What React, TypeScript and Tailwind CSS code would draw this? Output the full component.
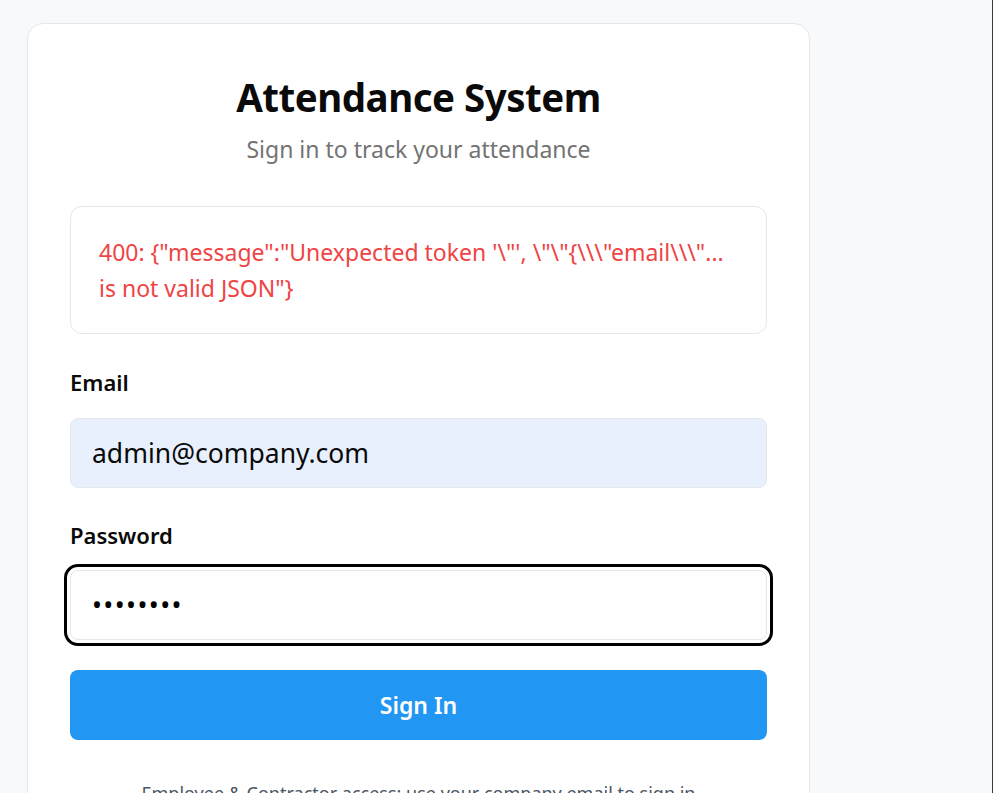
import { useState } from 'react'

const errorText =
  '400: {"message":"Unexpected token \'\\"\', \\"\\"{\\\\\\"email\\\\\\"... is not valid JSON"}'

export default function App() {
  const [email, setEmail] = useState('admin@company.com')
  const [password, setPassword] = useState('password')

  return (
    <div
      className="min-h-screen h-[793px] overflow-hidden bg-[#f8f9fb] border-r border-[#3a3a3a]"
      style={{ fontFamily: '"Noto Sans", "Open Sans", sans-serif' }}
    >
      <div className="ml-[27px] pt-[23px] w-[783px]">
        <div className="bg-white border border-[#e5e7eb] rounded-[16px] px-[42px] pt-[52px] pb-10">
          {/* Header */}
          <div className="text-center">
            <h1 className="text-[38.5px] leading-[42px] font-bold text-[#0a0a0a] tracking-[-0.5px]">
              Attendance System
            </h1>
            <p className="mt-[15px] text-[23px] leading-[32px] text-[#737373]">
              Sign in to track your attendance
            </p>
          </div>

          {/* Error */}
          <div className="mt-[41px] border border-[#e5e7eb] rounded-[12px] px-[28px] py-[27px] text-[23px] leading-[36px] text-[#ef4444]">
            {errorText}
          </div>

          {/* Form */}
          <form className="mt-[32px]" onSubmit={(e) => e.preventDefault()}>
            <label className="block text-[22px] leading-[32px] font-semibold text-[#0a0a0a]">
              Email
            </label>
            <input
              type="email"
              value={email}
              onChange={(e) => setEmail(e.target.value)}
              className="mt-[20px] block w-full h-[70px] px-[21px] rounded-[8px] border border-[#e5e7eb] bg-[#e8f0fe] text-[26.5px] text-[#0a0a0a] outline-none"
            />

            <label className="mt-[31px] block text-[22px] leading-[32px] font-semibold text-[#0a0a0a]">
              Password
            </label>
            <input
              type="password"
              value={password}
              onChange={(e) => setPassword(e.target.value)}
              className="mt-[19px] block w-full h-[70px] px-[21px] rounded-[8px] border border-[#e5e7eb] bg-white text-[26.5px] tracking-[1.4px] text-black outline-[3px] outline-solid outline-black outline-offset-[3px]"
            />

            <button
              type="submit"
              className="mt-[30px] w-full h-[70px] rounded-[8px] bg-[#2196f3] text-white text-[23px] font-semibold"
            >
              Sign In
            </button>
          </form>

          <p className="mt-[39px] text-center text-[18px] leading-[28px] text-[#4b5563]">
            Employee &amp; Contractor access: use your company email to sign in
          </p>
        </div>
      </div>
    </div>
  )
}
